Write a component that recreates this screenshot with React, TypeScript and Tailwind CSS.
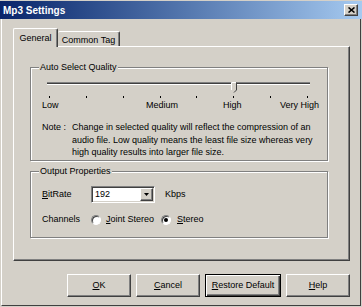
import React from "react";

const raised =
  "border border-t-white border-l-white border-r-[#404040] border-b-[#404040] shadow-[inset_-1px_-1px_0_#808080]";
const etched = "border border-[#808080] shadow-[inset_1px_1px_0_#fff,1px_1px_0_#fff]";

function Mn({ k, rest }: { k: string; rest: string }) {
  return (
    <span>
      <span className="underline underline-offset-[1px]">{k}</span>
      {rest}
    </span>
  );
}

function Group({
  label,
  className,
  children,
}: {
  label: string;
  className: string;
  children: React.ReactNode;
}) {
  return (
    <div className={`relative ml-[16px] w-[298px] ${etched} ${className}`}>
      <span className="absolute -top-[6px] left-[8px] bg-[#d4d0c8] px-[1px] leading-[11px]">{label}</span>
      {children}
    </div>
  );
}

function Radio({ checked }: { checked?: boolean }) {
  return (
    <span className="flex h-[10px] w-[10px] items-center justify-center rounded-full border border-t-[#808080] border-l-[#808080] border-r-white border-b-white bg-white shadow-[inset_1px_1px_0_#404040]">
      {checked ? <span className="h-[4px] w-[4px] rounded-full bg-black" /> : null}
    </span>
  );
}

function Button({ w, isDefault, children }: { w: string; isDefault?: boolean; children: React.ReactNode }) {
  if (isDefault) {
    return (
      <button
        type="button"
        className={`${w} h-[23px] border border-black bg-[#d4d0c8] shadow-[inset_1px_1px_0_#fff,inset_-1px_-1px_0_#404040,inset_-2px_-2px_0_#808080]`}
      >
        {children}
      </button>
    );
  }
  return (
    <button type="button" className={`${w} h-[23px] bg-[#d4d0c8] ${raised}`}>
      {children}
    </button>
  );
}

const ticks = [0, 1, 2, 3, 4, 5, 6, 7];

export default function App() {
  return (
    <div className="flex h-[307px] w-[362px] flex-col bg-[#d4d0c8] font-['Liberation_Sans',Arial,sans-serif] text-[9px] leading-[11px] text-black">
      {/* title bar */}
      <div className="mt-[1px] flex h-[18px] items-center justify-between bg-linear-to-r from-[#0a246a] to-[#a6caf0] pl-[3px] pr-[4px]">
        <span className="text-[10px] font-bold text-white">Mp3 Settings</span>
        <button type="button" className={`flex h-[12px] w-[14px] items-center justify-center bg-[#d4d0c8] ${raised}`}>
          <svg width="7" height="6" viewBox="0 0 7 6">
            <path d="M0.5 0.5 L6.5 5.5 M6.5 0.5 L0.5 5.5" stroke="#000" strokeWidth="1.6" />
          </svg>
        </button>
      </div>

      {/* body */}
      <div className="mx-[1px] mb-[1px] flex flex-1 flex-col border-l border-b border-r border-l-white border-r-[#404040] border-b-[#404040] pt-[9px]">
        {/* tabs */}
        <div className="flex items-end pl-[11px]">
          <div className="relative z-10 -mb-[1px] flex h-[19px] w-[45px] items-start justify-center rounded-t-[2px] border-l border-r border-t border-l-white border-t-white border-r-[#404040] bg-[#d4d0c8] pt-[4px] shadow-[inset_-1px_0_0_#808080]">
            General
          </div>
          <div className="flex h-[15px] w-[62px] items-start justify-center rounded-t-[2px] border-r border-t border-t-white border-r-[#404040] pt-[3px] shadow-[inset_-1px_0_0_#808080]">
            Common Tag
          </div>
        </div>

        {/* panel */}
        <div className={`ml-[11px] flex h-[215px] w-[337px] flex-col ${raised}`}>
          <Group label="Auto Select Quality" className="mt-[20px] h-[94px]">
            <div className="relative ml-[16px] mt-[14px] h-[11px] w-[263px]">
              <div className="mt-[4px] h-[3px] border-t border-b border-t-[#808080] border-b-white bg-[#404040]" />
              <svg className="absolute left-[184px] top-0" width="6" height="11" viewBox="0 0 6 11">
                <path d="M0.5 0.5 H5.5 V8 L3 10.5 L0.5 8 Z" fill="#d4d0c8" />
                <path d="M0.5 8 V0.5 H5" stroke="#fff" fill="none" />
                <path d="M5.5 0.5 V8 L3 10.5" stroke="#404040" fill="none" />
              </svg>
            </div>
            <div className="ml-[18px] mt-[3px] flex h-[2px] w-[259px] justify-between">
              {ticks.map((t) => (
                <span key={t} className="h-[2px] w-[1px] bg-black" />
              ))}
            </div>
            <div className="ml-[11px] mt-[2px] flex h-[11px]">
              <span className="w-[104px]">Low</span>
              <span className="w-[77px]">Medium</span>
              <span className="w-[57px]">High</span>
              <span>Very High</span>
            </div>
            <div className="ml-[11px] mt-[10px] flex leading-[12.5px]">
              <span className="w-[30px]">Note :</span>
              <span>
                Change in selected quality will reflect the compression of an
                <br />
                audio file. Low quality means the least file size whereas very
                <br />
                high quality results into larger file size.
              </span>
            </div>
          </Group>

          <Group label="Output Properties" className="mt-[10px] h-[67px]">
            <div className="ml-[11px] mt-[14px] flex h-[17px] items-center">
              <span className="w-[49px]">
                <Mn k="B" rest="itRate" />
              </span>
              <div className="flex h-[17px] w-[64px] items-center border border-t-[#808080] border-l-[#808080] border-r-white border-b-white bg-white shadow-[inset_1px_1px_0_#404040,inset_-1px_-1px_0_#d4d0c8]">
                <span className="flex-1 pl-[3px]">192</span>
                <span className={`mr-[1px] flex h-[13px] w-[13px] items-center justify-center bg-[#d4d0c8] ${raised}`}>
                  <svg width="5" height="3" viewBox="0 0 5 3">
                    <path d="M0 0 H5 L2.5 3 Z" fill="#000" />
                  </svg>
                </span>
              </div>
              <span className="ml-[10px]">Kbps</span>
            </div>
            <div className="ml-[11px] mt-[10px] flex h-[13px] items-center">
              <span className="w-[49px]">Channels</span>
              <Radio />
              <span className="ml-[5px] w-[55px]">
                <Mn k="J" rest="oint Stereo" />
              </span>
              <Radio checked />
              <span className="ml-[6px]">
                <Mn k="S" rest="tereo" />
              </span>
            </div>
          </Group>
        </div>

        {/* buttons */}
        <div className="mt-[13px] flex justify-end gap-[5px] pr-[10px]">
          <Button w="w-[64px]">
            <Mn k="O" rest="K" />
          </Button>
          <Button w="w-[64px]">
            <Mn k="C" rest="ancel" />
          </Button>
          <Button w="w-[76px]" isDefault>
            <Mn k="R" rest="estore Default" />
          </Button>
          <Button w="w-[64px]">
            <Mn k="H" rest="elp" />
          </Button>
        </div>
      </div>
    </div>
  );
}
